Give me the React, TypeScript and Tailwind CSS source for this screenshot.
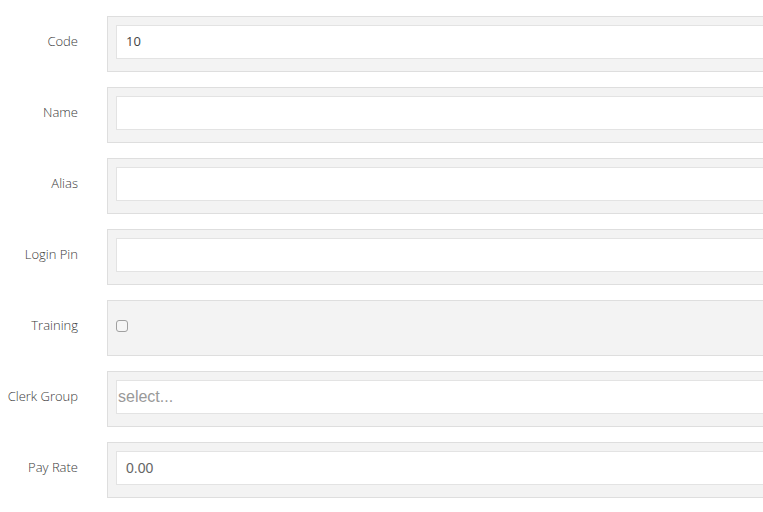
const fields = [
  { label: "Code", kind: "text", value: "10" },
  { label: "Name", kind: "text", value: "" },
  { label: "Alias", kind: "text", value: "" },
  { label: "Login Pin", kind: "text", value: "" },
  { label: "Training", kind: "check", value: "" },
  { label: "Clerk Group", kind: "select", value: "" },
  { label: "Pay Rate", kind: "money", value: "0.00" },
]

export default function App() {
  return (
    <div className="w-[763px] h-[512px] overflow-hidden bg-white pt-4 font-['Open_Sans',sans-serif]">
      <div className="flex flex-col gap-[15px]">
        {fields.map(f => (
          <div key={f.label} className="flex items-start">
            <div className="w-[78px] shrink-0 pt-[15px] text-right text-[13px] leading-5 font-light text-[#3a3a3a]">{f.label}</div>
            <div className="ml-[29px] w-[700px] shrink-0 h-[56px] bg-[#f3f3f3] border border-[#dedede] p-2">
              {f.kind === "check" ? (
                <div className="h-[34px] flex items-center">
                  <div className="w-[12px] h-[12px] rounded-[3px] border border-[#a0a0a0] bg-[#f5f5f5]"></div>
                </div>
              ) : f.kind === "select" ? (
                <div className="h-[34px] bg-white border border-[#e3e3e3] flex items-center pl-[1px] font-['Liberation_Sans',sans-serif] text-[16px] text-[#999]">
                  select...
                </div>
              ) : f.kind === "money" ? (
                <div className="h-[34px] bg-white border border-[#e3e3e3] flex items-center pl-[9px] font-['Liberation_Sans',sans-serif] text-[14px] text-[#666]">
                  {f.value}
                </div>
              ) : (
                <div className="h-[34px] bg-white border border-[#e3e3e3] flex items-center pl-[9px] text-[13px] text-[#444]">
                  {f.value}
                </div>
              )}
            </div>
          </div>
        ))}
      </div>
    </div>
  )
}
